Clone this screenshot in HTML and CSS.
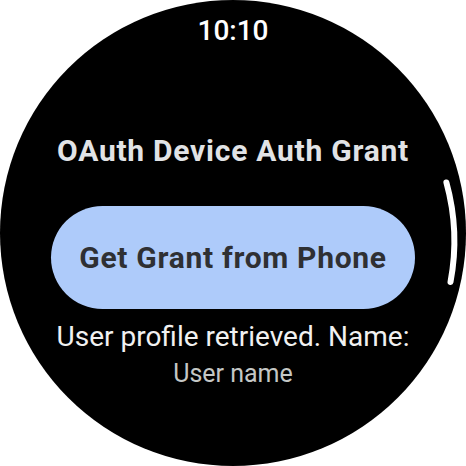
FILE: index.html
```html
<!DOCTYPE html>
<html>
<head>
<meta charset="utf-8">
<link rel="stylesheet" href="styles.css">
</head>
<body>
<div class="watch">
  <div class="time">10:10</div>
  <div class="title">OAuth Device Auth Grant</div>
  <button class="chip">Get Grant from Phone</button>
  <div class="status">User profile retrieved. Name:</div>
  <div class="name">User name</div>
  <svg class="scrollbar" width="466" height="466" viewBox="0 0 466 466">
    <path d="M 446.4 182.5 A 220 220 0 0 1 450.5 282" fill="none" stroke="#ffffff" stroke-width="6" stroke-linecap="round"/>
  </svg>
</div>
</body>
</html>
```
FILE: styles.css
```css
html, body {
  margin: 0;
  padding: 0;
  background: #ffffff;
}
body {
  width: 466px;
  height: 466px;
  font-family: Roboto, "Noto Sans", sans-serif;
}
.watch {
  position: relative;
  width: 466px;
  height: 466px;
  border-radius: 50%;
  background: #000000;
  overflow: hidden;
  display: flex;
  flex-direction: column;
  align-items: center;
}
.time {
  margin-top: 17px;
  font-size: 28px;
  line-height: 28px;
  font-weight: 500;
  color: #ffffff;
}
.title {
  margin-top: 91px;
  font-size: 30px;
  line-height: 30px;
  font-weight: 700;
  letter-spacing: 0.75px;
  color: #e1e3e6;
}
.chip {
  margin-top: 40px;
  width: 364px;
  height: 103px;
  border: none;
  border-radius: 52px;
  background: #aecbfa;
  color: #2f3033;
  font-family: Roboto, "Noto Sans", sans-serif;
  font-size: 30px;
  font-weight: 700;
  letter-spacing: 0.7px;
  padding: 0;
}
.status {
  margin-top: 12px;
  font-size: 28px;
  line-height: 32px;
  color: #f1f1f1;
}
.name {
  margin-top: 6px;
  font-size: 25px;
  line-height: 30px;
  color: #c4c7c5;
}
.scrollbar {
  position: absolute;
  left: 0;
  top: 0;
}
```
